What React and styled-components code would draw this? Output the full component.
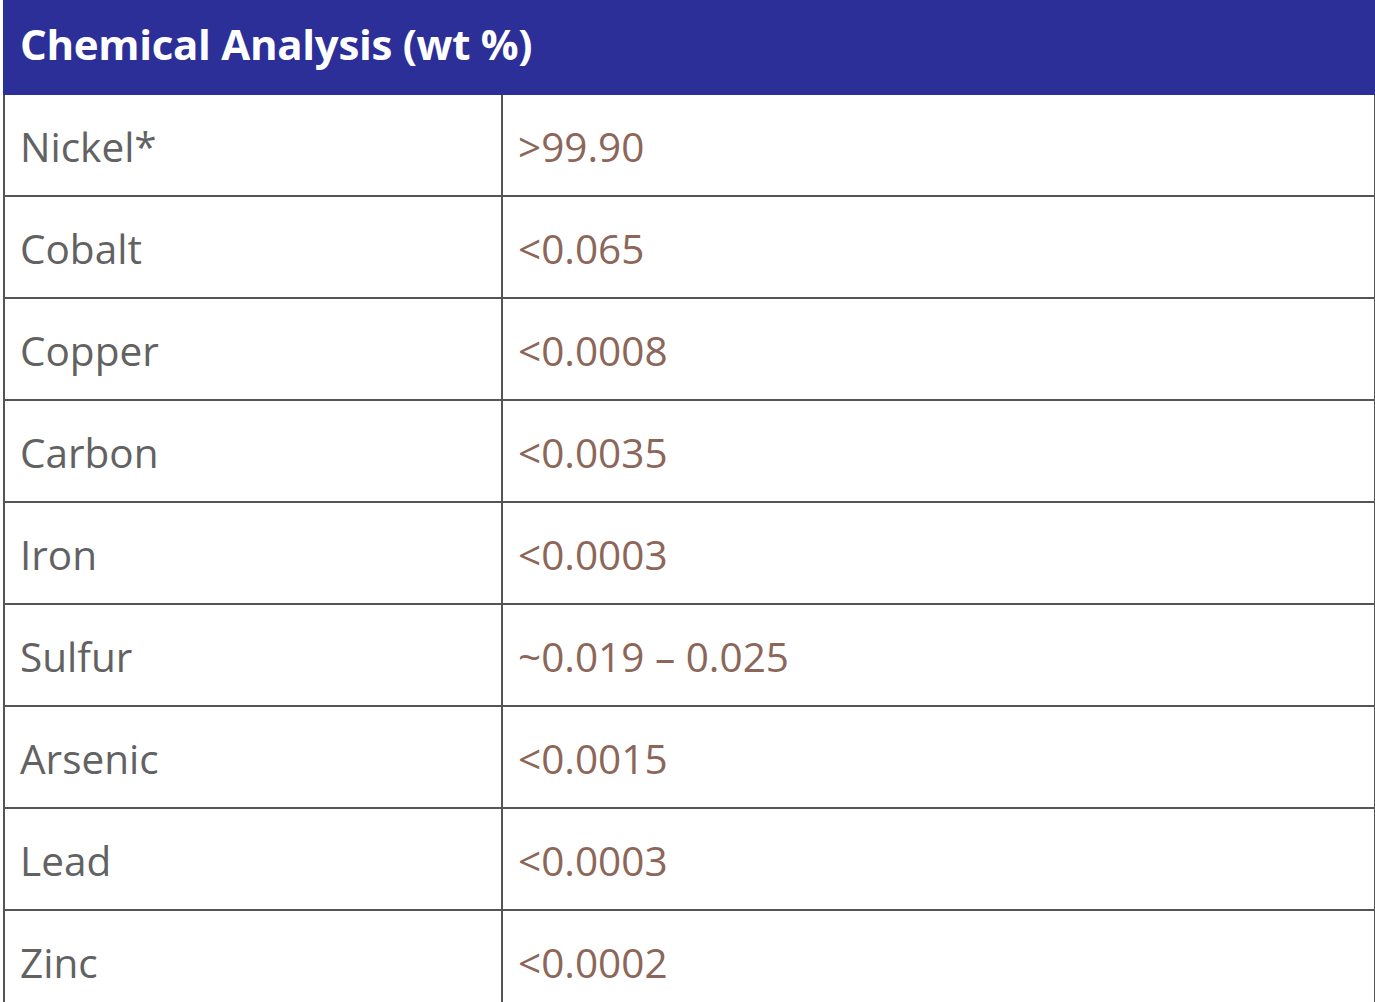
import React from "react";
import styled, { createGlobalStyle } from "styled-components";

const Global = createGlobalStyle`
  html, body { margin: 0; padding: 0; background: #ffffff; }
  body { font-family: "Open Sans", "Lato", sans-serif; }
`;

const Table = styled.div`
  margin-left: 3px;
  width: 1369px;
  border-left: 2px solid #555555;
  border-right: 2px solid #555555;
  display: flex;
  flex-direction: column;
`;

const Header = styled.div`
  height: 95px;
  background: #2c2f98;
  color: #ffffff;
  font-weight: 700;
  font-size: 42px;
  letter-spacing: -0.3px;
  display: flex;
  align-items: center;
  padding-bottom: 8px;
  box-sizing: border-box;
  margin-left: -2px;
  margin-right: -2px;
  padding-left: 17px;
`;

const Row = styled.div`
  display: grid;
  grid-template-columns: 496px 2px 1fr;
  height: ${(p) => (p.$first ? 100 : 102)}px;
  border-top: ${(p) => (p.$first ? "none" : "2px solid #555555")};
  box-sizing: border-box;
`;

const Divider = styled.div`
  background: #555555;
`;

const Cell = styled.div`
  display: flex;
  align-items: center;
  padding-left: 15px;
  padding-top: 2px;
  font-size: 40.5px;
  color: ${(p) => (p.$value ? "#8c6759" : "#626262")};
`;

const rows = [
  ["Nickel*", ">99.90"],
  ["Cobalt", "<0.065"],
  ["Copper", "<0.0008"],
  ["Carbon", "<0.0035"],
  ["Iron", "<0.0003"],
  ["Sulfur", "~0.019 – 0.025"],
  ["Arsenic", "<0.0015"],
  ["Lead", "<0.0003"],
  ["Zinc", "<0.0002"],
];

export default function App() {
  return (
    <>
      <Global />
      <Table>
        <Header>Chemical Analysis (wt %)</Header>
        {rows.map(([k, v], i) => (
          <Row key={k} $first={i === 0}>
            <Cell>{k}</Cell>
            <Divider />
            <Cell $value>{v}</Cell>
          </Row>
        ))}
      </Table>
    </>
  );
}
